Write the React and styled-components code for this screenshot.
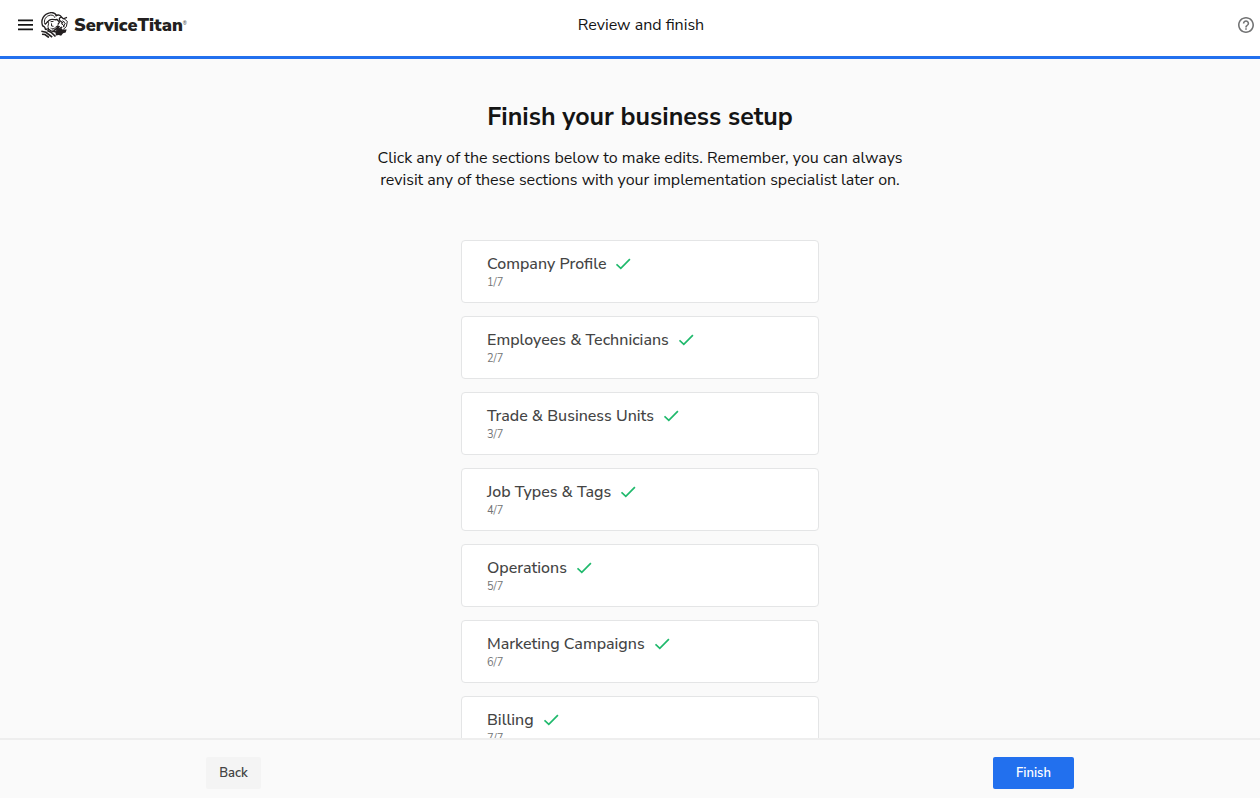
import styled, { createGlobalStyle } from "styled-components";

const GlobalStyle = createGlobalStyle`
    *, *::before, *::after {
        box-sizing: border-box;
    }

    body {
        margin: 0;
        background-color: #fafafa;
        color: #141414;
        font-family: "Nunito Sans", Lato, "Open Sans", sans-serif;
    }

    button {
        font-family: inherit;
        cursor: pointer;
    }
`;

const Page = styled.div`
    display: flex;
    flex-direction: column;
    height: 100vh;
`;

const Header = styled.header`
    display: grid;
    grid-template-columns: 1fr auto 1fr;
    align-items: center;
    flex: none;
    height: 59px;
    padding: 0 6px 6px 18px;
    background-color: #ffffff;
    border-bottom: 3px solid #2270ee;
`;

const Left = styled.div`
    display: flex;
    align-items: center;
    gap: 8px;
`;

const IconButton = styled.button`
    display: flex;
    padding: 0;
    border: none;
    background: none;
    color: ${(props) => props.$color};
    justify-self: ${(props) => props.$align || "start"};
`;

const Brand = styled.a`
    display: flex;
    align-items: center;
    gap: 6px;
    color: #231f20;
    text-decoration: none;
`;

const BrandName = styled.span`
    font-size: 18px;
    line-height: 24px;
    font-weight: 900;
`;

const Registered = styled.sup`
    font-size: 5px;
    line-height: 5px;
    vertical-align: 6px;
    font-weight: 400;
`;

const HeaderTitle = styled.span`
    padding-left: 10px;
    font-size: 16px;
    line-height: 24px;
`;

const Main = styled.main`
    flex: 1;
    min-height: 0;
    overflow: hidden;
    display: flex;
    flex-direction: column;
    align-items: center;
    padding: 42px 0 0 20px;
`;

const Title = styled.h1`
    margin: 0;
    font-size: 25px;
    line-height: 32px;
    font-weight: 700;
`;

const Intro = styled.p`
    margin: 14px 0 0;
    max-width: 540px;
    font-size: 16px;
    line-height: 22px;
    text-align: center;
`;

const Sections = styled.ul`
    display: flex;
    flex-direction: column;
    gap: 13px;
    width: 358px;
    margin: 49px 0 0;
    padding: 0;
    list-style: none;
`;

const Card = styled.button`
    display: block;
    width: 100%;
    height: 63px;
    padding: 0 25px;
    text-align: left;
    background-color: #ffffff;
    border: 1px solid #e4e5e6;
    border-radius: 4px;
`;

const CardTitle = styled.span`
    display: flex;
    align-items: center;
    gap: 10px;
    color: #444444;
    font-size: 16px;
    line-height: 22px;
    font-weight: 500;
`;

const Step = styled.span`
    display: block;
    color: #737475;
    font-size: 11px;
    line-height: 16px;
`;

const Footer = styled.footer`
    flex: none;
    padding: 17px 0 9px 20px;
    background-color: #fafafa;
    border-top: 2px solid #eeeeee;
`;

const Actions = styled.div`
    display: flex;
    justify-content: space-between;
    max-width: 868px;
    margin: 0 auto;
`;

const Button = styled.button`
    height: 32px;
    min-width: ${(props) => (props.$primary ? "81px" : "55px")};
    padding: 0 12px;
    border: none;
    border-radius: 2px;
    background-color: ${(props) => (props.$primary ? "#2270ee" : "#f4f4f4")};
    color: ${(props) => (props.$primary ? "#ffffff" : "#444444")};
    font-size: 13px;
    font-weight: 600;
`;

const sections = [
  "Company Profile",
  "Employees & Technicians",
  "Trade & Business Units",
  "Job Types & Tags",
  "Operations",
  "Marketing Campaigns",
  "Billing",
];

const MenuIcon = () => (
  <svg width="15" height="12" viewBox="0 0 15 12" fill="currentColor" aria-hidden="true">
    <path d="M0 .5h15v1.700H0zM0 5h15v1.700H0zM0 9.500h15v1.700H0z" />
  </svg>
);

const HelpIcon = () => (
  <svg width="16" height="16" viewBox="2 2 20 20" fill="currentColor" aria-hidden="true">
    <path d="M11 18h2v-2h-2v2zm1-16C6.480 2 2 6.480 2 12s4.480 10 10 10 10-4.480 10-10S17.520 2 12 2zm0 18c-4.410 0-8-3.590-8-8s3.590-8 8-8 8 3.590 8 8-3.590 8-8 8zm0-14c-2.210 0-4 1.790-4 4h2c0-1.100.900-2 2-2s2 .900 2 2c0 2-3 1.750-3 5h2c0-2.250 3-2.500 3-5 0-2.210-1.790-4-4-4z" />
  </svg>
);

const CheckIcon = () => (
  <svg width="15" height="12" viewBox="0 0 15 12" fill="none" stroke="#1fb96c" strokeWidth="1.7" aria-hidden="true">
    <path d="M.5 6.300 4.800 10.300 13.900 1.200" />
  </svg>
);

const TitanLogo = () => (
  <svg width="27" height="26" viewBox="0 0 82 78" fill="none" stroke="currentColor" strokeWidth="4" aria-hidden="true">
    <path d="M5 42C-2 24 8 6 26 2c8-2 17 1 21 8" />
    <path d="M12 37C7 23 15 11 29 9c7-1 12 3 13 8" strokeWidth="3" />
    <path d="M4 42c7 0 9 6 10 12M12 37c9-4 8-14 20-15 8-1 12 3 17 0" />
    <path d="M18 28c6 1 6 6 4 11-3 7 3 10 1 17M29 29l9-1M32 34v8l6 1" strokeWidth="3" />
    <path d="M44 12c8-6 15-3 18 3l6 5 11-4M62 15c-6 1-8 6-5 10l10 9M47 21l9 9-5 8" />
    <path d="M70 20l10 8-3 16-9 8M65 26l8 6M61 34l11 9M74 33l-7 13" strokeWidth="3" />
    <path d="M14 54c6-6 11-2 16 3l15 3 7-9 12-6" />
    <path d="M44 62l10-12 8-2 3 5 13 0-3 9-8 2-6 8-7-3-9 2z" fill="currentColor" stroke="none" />
    <path d="M27 47l12 2 11-9 8 3-6 8-12 7z" fill="currentColor" stroke="none" />
    <path d="M31 50l8 3 8-8" stroke="#ffffff" strokeWidth="2" />
    <path d="M1 58l14 3 19 15M3 67l9 1 12 9M19 56l13 6 12 12" strokeWidth="5" />
  </svg>
);

const TopBar = () => {
  return (
    <Header>
      <Left>
        <IconButton $color="#141414" aria-label="Open menu">
          <MenuIcon />
        </IconButton>
        <Brand href="#">
          <TitanLogo />
          <BrandName>
            ServiceTitan<Registered>®</Registered>
          </BrandName>
        </Brand>
      </Left>
      <HeaderTitle>Review and finish</HeaderTitle>
      <IconButton $color="#737475" $align="end" aria-label="Help">
        <HelpIcon />
      </IconButton>
    </Header>
  );
};

const App = () => {
  return (
    <Page>
      <GlobalStyle />
      <TopBar />
      <Main>
        <Title>Finish your business setup</Title>
        <Intro>
          Click any of the sections below to make edits. Remember, you can always
          revisit any of these sections with your implementation specialist later on.
        </Intro>
        <Sections>
          {sections.map((name, i) => (
            <li key={name}>
              <Card>
                <CardTitle>
                  {name}
                  <CheckIcon />
                </CardTitle>
                <Step>
                  {i + 1}/{sections.length}
                </Step>
              </Card>
            </li>
          ))}
        </Sections>
      </Main>
      <Footer>
        <Actions>
          <Button>Back</Button>
          <Button $primary>Finish</Button>
        </Actions>
      </Footer>
    </Page>
  );
};

export default App;
